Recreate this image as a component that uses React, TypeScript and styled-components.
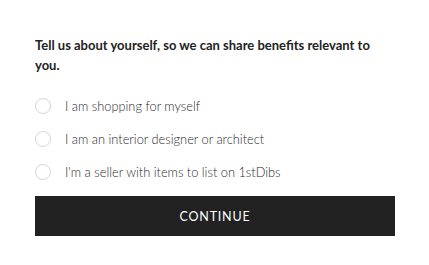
import React, { useState } from "react";
import styled, { createGlobalStyle } from "styled-components";

const Global = createGlobalStyle`
  html, body { margin: 0; padding: 0; background: #fff; }
  * { box-sizing: border-box; }
`;

const Panel = styled.div`
  width: 429px;
  height: 265px;
  padding: 35px 34px 0 35px;
  font-family: "Lato", "Liberation Sans", sans-serif;
  color: #222;
`;

const Heading = styled.h2`
  margin: 0;
  font-size: 13px;
  line-height: 20px;
  font-weight: 700;
  color: #222;
`;

const Options = styled.div`
  display: flex;
  flex-direction: column;
  gap: 17px;
  margin-top: 23px;
`;

const Option = styled.label`
  display: flex;
  align-items: center;
  gap: 14px;
  height: 16px;
  cursor: pointer;
`;

const Circle = styled.span<{ $checked: boolean }>`
  width: 16px;
  height: 16px;
  border-radius: 50%;
  border: 1px solid #d6d6d6;
  background: ${(p) => (p.$checked ? "#222" : "#fff")};
  flex-shrink: 0;
`;

const OptionText = styled.span`
  font-size: 12.8px;
  font-weight: 300;
  color: #2a2a2a;
`;

const Button = styled.button`
  margin-top: 16px;
  width: 360px;
  height: 40px;
  border: none;
  background: #222;
  color: #fff;
  font-family: "Lato", "Liberation Sans", sans-serif;
  font-size: 12.5px;
  font-weight: 400;
  letter-spacing: 0.8px;
  cursor: pointer;
`;

const options = [
  "I am shopping for myself",
  "I am an interior designer or architect",
  "I'm a seller with items to list on 1stDibs",
];

export default function App() {
  const [sel, setSel] = useState<number | null>(null);
  return (
    <>
      <Global />
      <Panel>
        <Heading>Tell us about yourself, so we can share benefits relevant to you.</Heading>
        <Options>
          {options.map((o, i) => (
            <Option key={o} onClick={() => setSel(i)}>
              <Circle $checked={sel === i} />
              <OptionText>{o}</OptionText>
            </Option>
          ))}
        </Options>
        <Button>CONTINUE</Button>
      </Panel>
    </>
  );
}
